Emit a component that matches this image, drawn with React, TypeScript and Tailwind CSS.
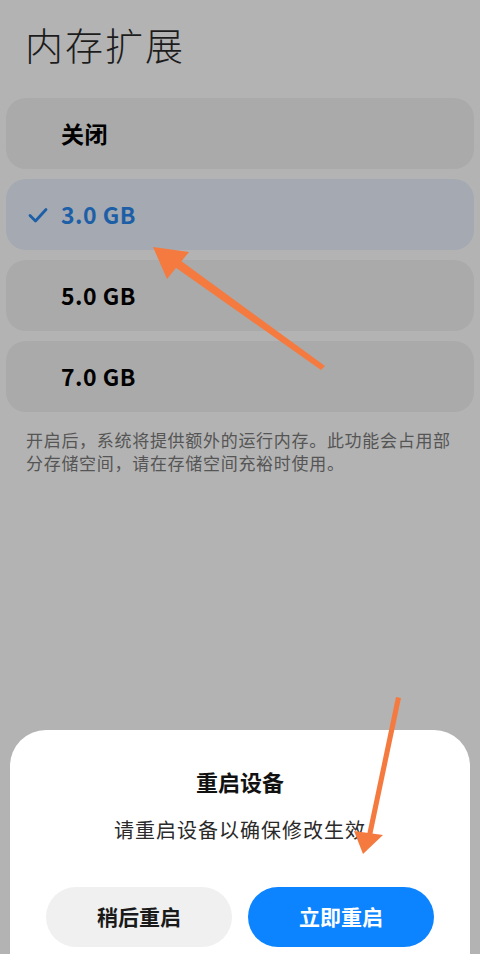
import React from 'react';

const OPTIONS = [
    { label: '关闭', checked: false },
    { label: '3.0 GB', checked: true },
    { label: '5.0 GB', checked: false },
    { label: '7.0 GB', checked: false },
];

const FONT = "font-['Noto_Sans_CJK_SC','Noto_Sans',sans-serif]";

const Check: React.FC = () => (
    <svg width="20" height="16" viewBox="0 0 20 16" className="absolute left-[22px]">
        <path d="M2 8.5 L7.5 14 L18 2.5" fill="none" stroke="#1d5fa6" strokeWidth="2.8" strokeLinecap="round" strokeLinejoin="round" />
    </svg>
);

const App: React.FC = () => {
    return (
        <div className={`relative w-[480px] h-[954px] overflow-hidden bg-[#b3b3b3] ${FONT}`}>
            <h1 className="pl-[25px] pt-[20px] text-[38px] leading-[48px] font-light text-[#1c1c1c] tracking-[2px]">内存扩展</h1>

            <div className="mt-[30px] px-[6px] flex flex-col gap-[10px]">
                {OPTIONS.map((opt) => (
                    <div
                        key={opt.label}
                        className={`relative h-[71px] rounded-[20px] flex items-center pl-[55px] ${opt.checked ? 'bg-[#a4a9b2]' : 'bg-[#aaaaaa]'}`}
                    >
                        {opt.checked && <Check />}
                        <span className={`text-[23px] tracking-[0.5px] font-bold ${opt.checked ? 'text-[#1d5fa6]' : 'text-black'}`}>{opt.label}</span>
                    </div>
                ))}
            </div>

            <p className="mt-[16px] px-[26px] text-[17px] leading-[23px] tracking-[0.7px] text-[#555555]">
                开启后，系统将提供额外的运行内存。此功能会占用部分存储空间，请在存储空间充裕时使用。
            </p>

            {/* restart dialog */}
            <div className="absolute left-[10px] right-[10px] top-[730px] bottom-[-40px] bg-white rounded-[36px] flex flex-col items-center">
                <div className="mt-[36px] text-[22px] leading-[30px] font-bold text-[#111]">重启设备</div>
                <div className="mt-[20px] text-[20px] leading-[28px] tracking-[1px] text-[#2a2a2a]">请重启设备以确保修改生效</div>
                <div className="mt-[43px] w-full px-[36px] flex gap-[16px]">
                    <button className="flex-1 h-[60px] rounded-full bg-[#f0f0f0] text-[21px] font-bold text-[#1a1a1a]">稍后重启</button>
                    <button className="flex-1 h-[60px] rounded-full bg-[#0d84ff] text-[21px] font-bold text-white">立即重启</button>
                </div>
            </div>

            {/* orange annotation arrows */}
            <svg className="absolute inset-0 pointer-events-none" width="480" height="954" viewBox="0 0 480 954">
                <polygon points="321,370 325,366 177,258 172,265" fill="#f57a3f" />
                <polygon points="153,247 189,252 167,279" fill="#f57a3f" />
                <polygon points="396,697 401,698 372,836 367,835" fill="#f57a3f" />
                <polygon points="363,854 354,831 383,835" fill="#f57a3f" />
            </svg>
        </div>
    );
};

export default App;
